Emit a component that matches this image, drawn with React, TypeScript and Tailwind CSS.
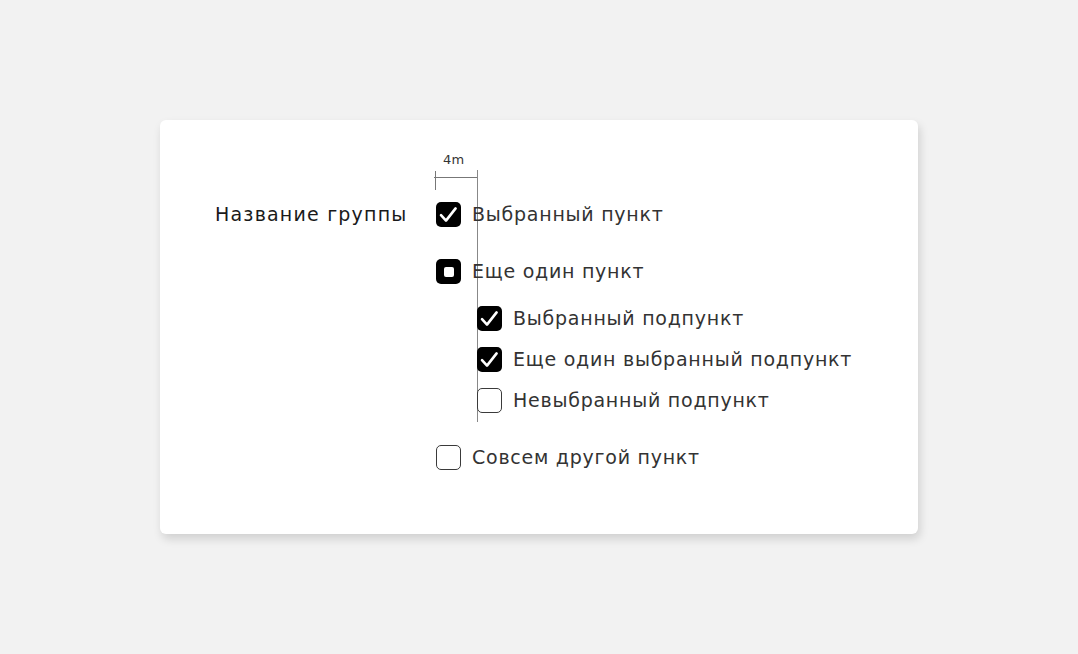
import React from "react";

type State = "checked" | "mixed" | "empty";

function Box({ state }: { state: State }) {
  if (state === "empty") {
    return <span className="block h-[25px] w-[25px] shrink-0 rounded-[5px] border-[1.5px] border-[#3a3a3a] bg-white" />;
  }
  return (
    <span className="relative flex h-[25px] w-[25px] shrink-0 items-center justify-center rounded-[5px] bg-black">
      {state === "checked" ? (
        <svg className="absolute inset-0" width="25" height="25" viewBox="0 0 25 25" fill="none">
          <path d="M5 13.2 L10 18.6 L19.6 6.4" stroke="white" strokeWidth="2.6" strokeLinecap="round" strokeLinejoin="round" />
        </svg>
      ) : (
        <span className="block h-[10px] w-[10px] rounded-[2px] bg-white" />
      )}
    </span>
  );
}

function Item({ state, label }: { state: State; label: string }) {
  return (
    <div className="flex h-[25px] items-center gap-[11px]">
      <Box state={state} />
      <span className="text-[19px] leading-[25px] tracking-[0.75px] text-[#333]">{label}</span>
    </div>
  );
}

export default function App() {
  return (
    <div
      className="flex min-h-[654px] w-full items-start justify-center bg-[#f2f2f2] pt-[120px]"
      style={{ fontFamily: '"DejaVu Sans", "Noto Sans", sans-serif' }}
    >
      <div className="relative flex h-[414px] w-[758px] rounded-[6px] bg-white pl-[55px] pt-[82px] shadow-[2px_5px_10px_rgba(0,0,0,0.14)]">
        {/* measurement annotation */}
        <div className="absolute left-[274px] top-[30px] h-[274px] w-[44px]">
          <span className="absolute left-[9px] top-px text-[13px] leading-[18px] tracking-[0.3px] text-[#333]">4m</span>
          <span className="absolute left-0 top-[27px] h-px w-[44px] bg-[#777]" />
          <span className="absolute left-[1px] top-[21px] h-[19px] w-px bg-[#777]" />
          <span className="absolute left-[43px] top-[20px] h-[252px] w-px bg-[#888]" />
        </div>

        <div className="w-[221px] shrink-0 text-[19px] leading-[25px] tracking-[1.2px] text-[#1a1a1a]">
          Название группы
        </div>

        <div className="relative flex flex-col">
          <Item state="checked" label="Выбранный пункт" />
          <div className="mt-[32px]">
            <Item state="mixed" label="Еще один пункт" />
          </div>
          <div className="ml-[41px] mt-[22px] flex flex-col gap-[16px]">
            <Item state="checked" label="Выбранный подпункт" />
            <Item state="checked" label="Еще один выбранный подпункт" />
            <Item state="empty" label="Невыбранный подпункт" />
          </div>
          <div className="mt-[32px]">
            <Item state="empty" label="Совсем другой пункт" />
          </div>
        </div>
      </div>
    </div>
  );
}
